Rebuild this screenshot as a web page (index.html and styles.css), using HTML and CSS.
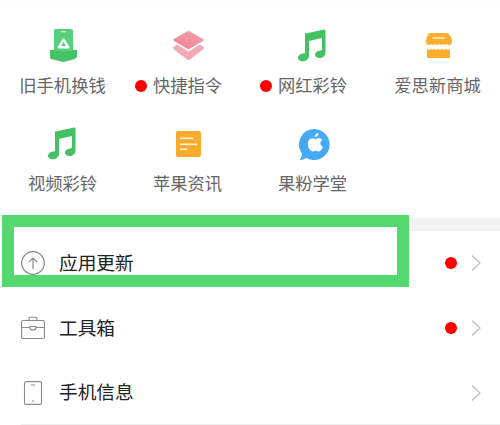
FILE: index.html
```html
<!DOCTYPE html>
<html lang="zh-CN">
  <head>
    <meta charset="UTF-8" />
    <meta name="viewport" content="width=device-width, initial-scale=1.0" />
    <title>应用更新</title>
    <link rel="stylesheet" href="styles.css">
  </head>
  <body>
    <div class="page">
      <div class="grid">
        <div class="item">
          <svg class="icon" width="36" height="36" viewBox="0 0 36 36">
            <rect x="9" y="2" width="19" height="24" rx="2" fill="#58d07a" />
            <path d="M5 23h4v1h19v-1h4v7l-2 2-12 3-12-3-1-2z" fill="#45c266" />
            <rect x="16" y="4" width="5" height="1.400" fill="#c9f2d4" />
            <path d="M18.500 12.500L23.200 20.300H13.800z" fill="none" stroke="#fff" stroke-width="2.400" stroke-linejoin="round" />
          </svg>
          <span class="label">旧手机换钱</span>
        </div>
        <div class="item">
          <svg class="icon" width="36" height="36" viewBox="0 0 36 36">
            <defs>
              <linearGradient id="pink" x1="0" y1="1" x2="1" y2="0">
                <stop offset="0" stop-color="#f27f93" />
                <stop offset="1" stop-color="#f4a3ae" />
              </linearGradient>
            </defs>
            <path d="M7 17.500l11.500 7 11.500-7 3.500 2.500q1 1 0 2l-13.500 10.500q-1.500 1-3 0l-13.500-10.500q-1-1 0-2z" fill="#f5a9b4" />
            <path d="M17 4.500q1.500-1 3 0l13 7.500q1.500 1 0 2l-13 7.500q-1.500 1-3 0l-13-7.500q-1.500-1 0-2z" fill="url(#pink)" />
          </svg>
          <span class="label has-dot">快捷指令</span>
        </div>
        <div class="item">
          <svg class="icon" width="36" height="36" viewBox="0 0 36 36">
            <use href="#note" x="-2" fill="#45c163" />
          </svg>
          <span class="label has-dot">网红彩铃</span>
        </div>
        <div class="item">
          <svg class="icon" width="36" height="36" viewBox="0 0 36 36">
            <path d="M9 6h19l3.500 5q1 3 0 6q-2.500 2-4.500 0q-2 2-4 0q-2 2-4 0q-2 2-4 0q-2 2-4 0q-2 2-4.500 0q-1-3 0-6z" fill="#fcaf2e" />
            <rect x="12.500" y="10" width="12" height="1.800" fill="#ffe4b0" />
            <path d="M7 22q2 1.500 4 0q2 1.500 3.500 0q2 1.500 4 0q2 1.500 4 0q2 1.500 3.500 0q2 1.500 4 0v8q0 1-1 1h-21q-1 0-1-1z" fill="#fcad2a" />
          </svg>
          <span class="label">爱思新商城</span>
        </div>
        <div class="item">
          <svg class="icon" width="36" height="36" viewBox="0 0 36 36">
            <defs>
              <path id="note" d="M13 6.500l18-4q1.500-.2 1.500 1.500v21.500c0 3.500-3 5.500-6 5.500-2.800 0-4.500-1.500-4.500-3.500s2-3.500 5-4l2-.4v-12l-13 3v14.400c0 3.500-3 5.800-6.500 5.800-2.800 0-4.500-1.500-4.500-3.500s2-3.700 5-4.200l2-.4v-19c0-.8.300-1 1-1.200z" />
            </defs>
            <use href="#note" x="-2" fill="#45c163" />
          </svg>
          <span class="label">视频彩铃</span>
        </div>
        <div class="item">
          <svg class="icon" width="36" height="36" viewBox="0 0 36 36">
            <rect x="6" y="6" width="25" height="26" rx="2" fill="#fbab2c" />
            <rect x="10" y="12.500" width="13" height="1.600" fill="#fff3dc" />
            <rect x="10" y="18.500" width="17" height="1.600" fill="#fff3dc" />
            <rect x="10" y="23.500" width="7" height="1.600" fill="#fff3dc" />
          </svg>
          <span class="label">苹果资讯</span>
        </div>
        <div class="item">
          <svg class="icon" width="36" height="36" viewBox="0 0 36 36">
            <path d="M19 4a15.500 15.500 0 1 1-7.500 29q-3 2-7 2q2.500-2.500 2.700-6a15.500 15.500 0 0 1 11.800-25z" fill="#45a9f7" />
            <path d="M23.500 13c1.500 0 3 .8 3.800 2-2.800 1.800-2.300 5.500.6 6.800-.7 2-2.300 4.700-4 4.700-1.300 0-1.700-.8-3.200-.8s-2 .8-3.200.8c-2 0-4.700-4-4.700-7.500 0-3.600 2.300-5.700 4.600-5.700 1.400 0 2.500.9 3.300.9s2-1.200 2.800-1.200z" fill="#fff" />
            <path d="M23.500 8c.2 2.300-1.800 4.300-3.800 4.200-.2-2.200 1.800-4.100 3.800-4.200z" fill="#fff" />
          </svg>
          <span class="label">果粉学堂</span>
        </div>
      </div>

      <div class="band"></div>

      <div class="row">
        <svg class="row-icon" width="24" height="24" viewBox="0 0 24 24" fill="none" stroke="#8a8a8a" stroke-width="1.200">
          <circle cx="12" cy="12" r="11.300" />
          <path d="M12 18V7M7.800 11.200L12 7l4.200 4.200" />
        </svg>
        <span class="row-title">应用更新</span>
        <span class="dot"></span>
        <svg class="chevron" width="10" height="16" viewBox="0 0 10 16" fill="none" stroke="#bdbdbd" stroke-width="1.200">
          <path d="M1 .5L9 8l-8 7.500" />
        </svg>
      </div>
      <div class="row">
        <svg class="row-icon" width="24" height="24" viewBox="0 0 24 24" fill="none" stroke="#8a8a8a" stroke-width="1.100">
          <rect x=".6" y="4.500" width="22.800" height="18" rx="1.500" />
          <path d="M8 4.500V2.200q0-1 1-1h6q1 0 1 1v2.300M.6 11.500h8.400M15 11.500h8.400M9 10.500h6v1.500q0 2-3 2t-3-2z" />
        </svg>
        <span class="row-title">工具箱</span>
        <span class="dot"></span>
        <svg class="chevron" width="10" height="16" viewBox="0 0 10 16" fill="none" stroke="#bdbdbd" stroke-width="1.200">
          <path d="M1 .5L9 8l-8 7.500" />
        </svg>
      </div>
      <div class="row row-last">
        <svg class="row-icon" width="24" height="24" viewBox="0 0 24 24" fill="none" stroke="#8a8a8a" stroke-width="1.100">
          <rect x="3.500" y=".6" width="17" height="22.800" rx="1.500" />
          <path d="M10 4h4M11 20h2" />
        </svg>
        <span class="row-title">手机信息</span>
        <svg class="chevron" width="10" height="16" viewBox="0 0 10 16" fill="none" stroke="#bdbdbd" stroke-width="1.200">
          <path d="M1 .5L9 8l-8 7.500" />
        </svg>
      </div>

      <div class="highlight"></div>
    </div>
  </body>
</html>
```
FILE: styles.css
```css
body {
  margin: 0;
  background-color: #ffffff;
  font-family: "Noto Sans CJK SC", "Noto Sans", sans-serif;
}

.page {
  position: relative;
  width: 500px;
  height: 425px;
  overflow: hidden;
}

.grid {
  display: grid;
  grid-template-columns: repeat(4, 125px);
  row-gap: 28px;
  margin-top: 5px;
  padding: 21px 0 23px;
  border-top: 1px solid #fbfbfb;
}

.item {
  display: flex;
  flex-direction: column;
  align-items: center;
  gap: 10px;
}

.icon {
  display: block;
}

.label {
  position: relative;
  font-size: 17.300px;
  line-height: 24px;
  color: #666666;
  white-space: nowrap;
}

.has-dot::before {
  content: "";
  position: absolute;
  left: -18px;
  top: 7px;
  width: 12px;
  height: 12px;
  border-radius: 50%;
  background-color: #ff0000;
}

.band {
  height: 13px;
  background: linear-gradient(to right, #fbfbfb 397px, #f2f2f2 397px);
}

.row {
  display: flex;
  align-items: center;
  height: 64px;
  margin-left: 21px;
  padding-right: 19px;
  border-bottom: 1px solid transparent;
}

.row-last {
  height: 63px;
  border-bottom-color: #eeeeee;
}

.row-icon {
  flex: none;
}

.row-title {
  margin: 0 0 4px 14px;
  font-size: 18.700px;
  color: #222222;
}

.dot {
  width: 12px;
  height: 12px;
  margin-left: auto;
  border-radius: 50%;
  background-color: #ff0000;
}

.chevron {
  margin-left: 14px;
}

.row-last .chevron {
  margin-left: auto;
}

.highlight {
  position: absolute;
  left: 2px;
  top: 215px;
  width: 407px;
  height: 72px;
  box-sizing: border-box;
  border: 12px solid #55d86d;
}
```
